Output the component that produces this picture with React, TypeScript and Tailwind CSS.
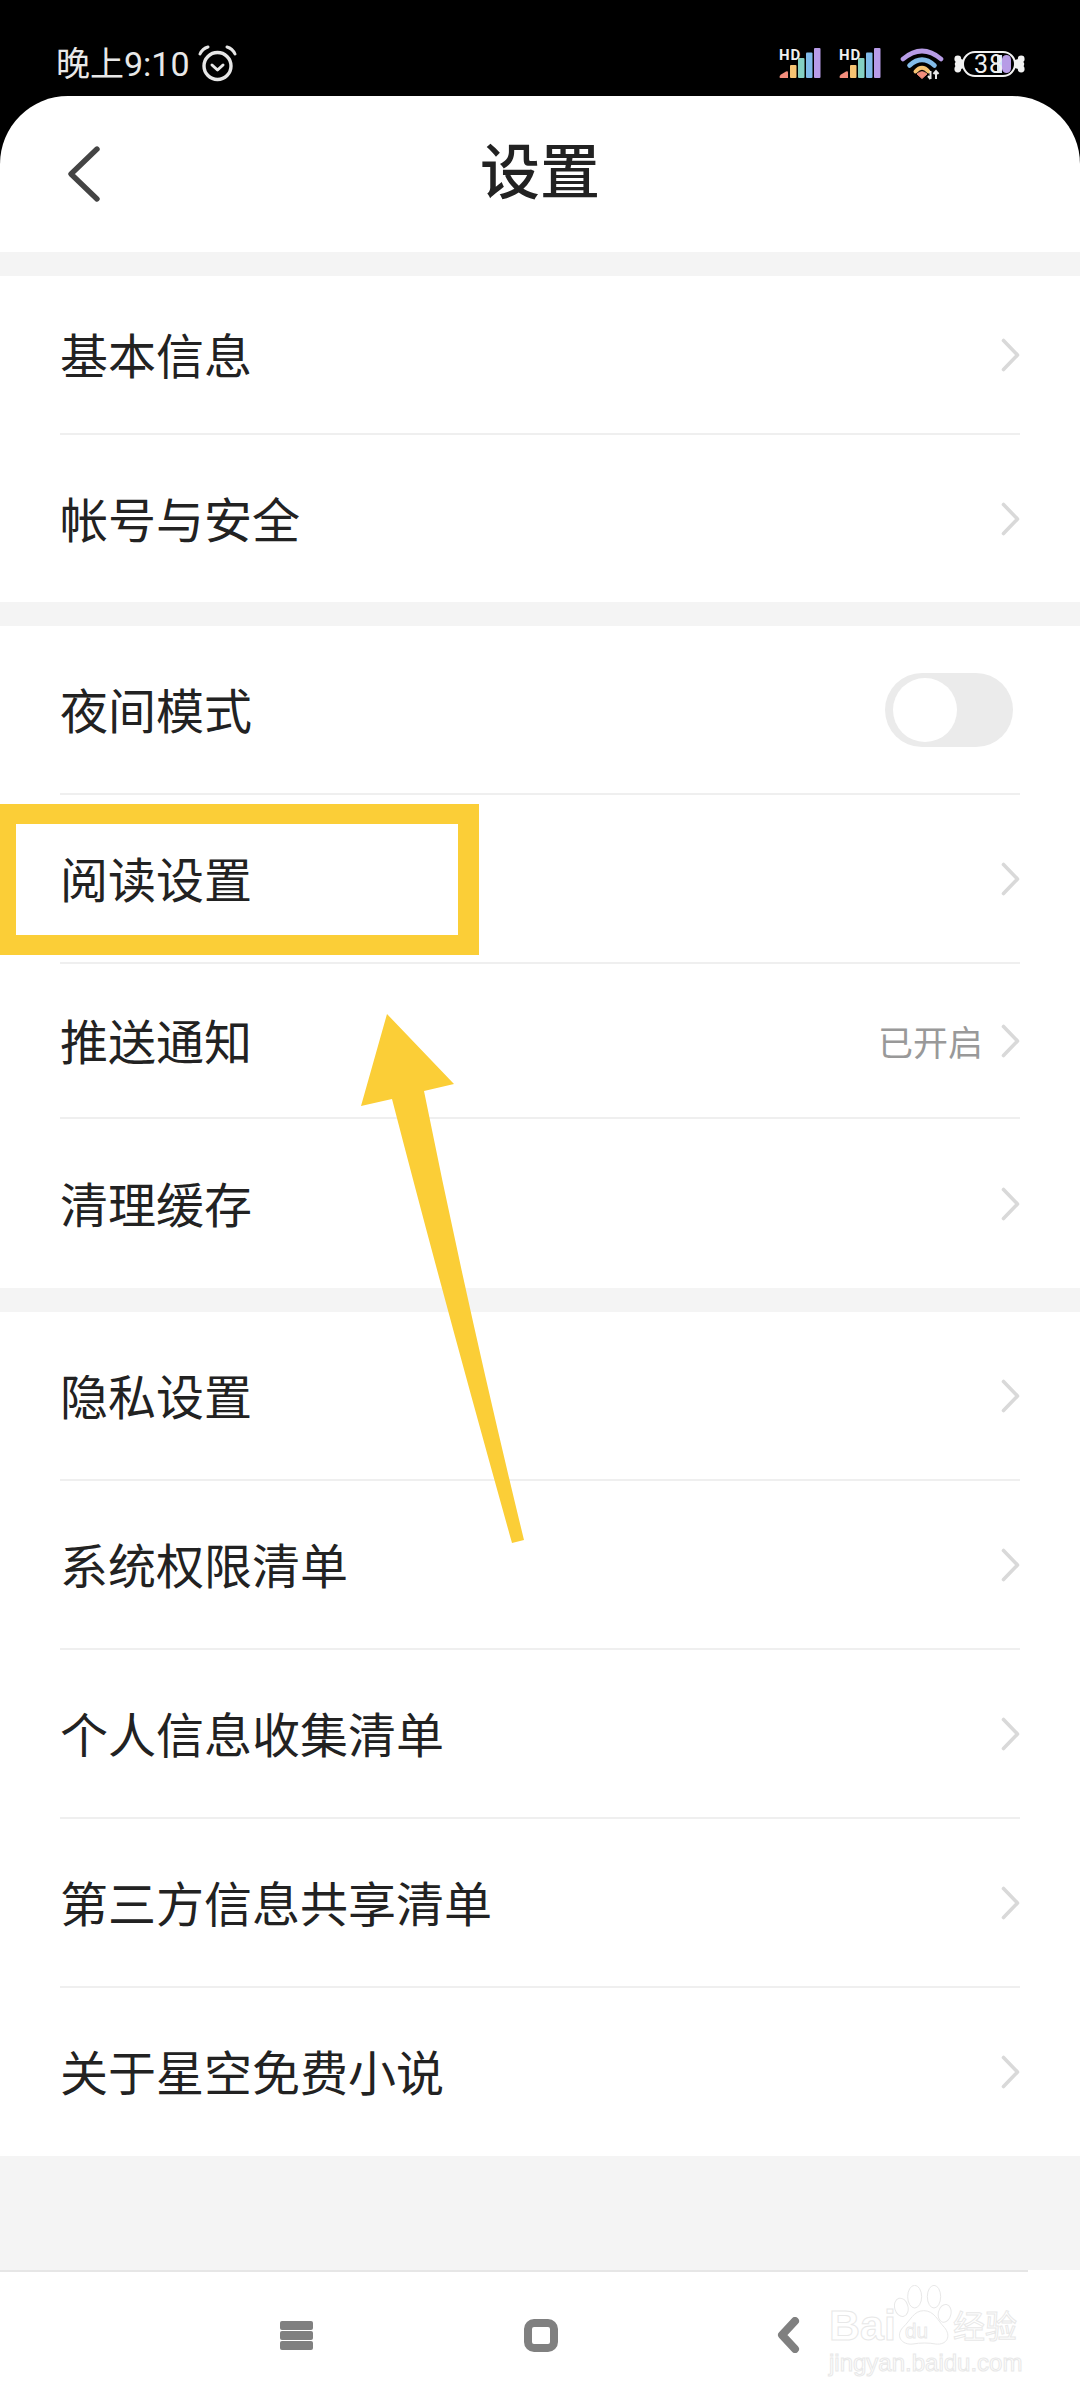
import React from "react";

const Chevron = () => (
  <svg width="19" height="34" viewBox="0 0 19 34" fill="none" className="shrink-0">
    <path d="M2.5 2.5 L16.5 17 L2.5 31.5" stroke="#d9d9d9" strokeWidth="3.6" strokeLinecap="round" strokeLinejoin="round" />
  </svg>
);

const Row = ({
  label,
  h,
  last,
  children,
}: {
  label: string;
  h: string;
  last?: boolean;
  children?: React.ReactNode;
}) => (
  <div className={`mx-[60px] flex items-center justify-between ${h} ${last ? "" : "border-b-2 border-[#efefef]"}`}>
    <span className="pb-[4px] text-[48px] leading-none text-[#222222]">{label}</span>
    {children ?? <Chevron />}
  </div>
);

const Signal = () => (
  <svg width="42" height="30" viewBox="0 0 42 30" className="shrink-0 -translate-y-[1px] overflow-visible">
    <path d="M0.5 29 Q0.5 27.5 2 26.5 L7 23.5 Q9 22.5 9 24.5 L9 30 L1.5 30 Q0.5 30 0.5 29 Z" fill="#f28d7c" />
    <rect x="11" y="17" width="6.5" height="13" rx="1" fill="#f6c473" />
    <rect x="19" y="10" width="6.5" height="20" rx="1" fill="#84d0c2" />
    <rect x="27" y="4.5" width="6.5" height="25.5" rx="1" fill="#7fb9e8" />
    <rect x="35" y="0" width="6.5" height="30" rx="1" fill="#b89ce8" />
    <text x="0" y="12" fontSize="15" fontWeight="700" letterSpacing="0.8" fill="#f0f0f0" fontFamily="Roboto, sans-serif">HD</text>
  </svg>
);

const Wifi = () => (
  <svg width="44" height="33" viewBox="0 0 44 33" fill="none" className="shrink-0">
    <path d="M3 12 Q22 -4 41 12" stroke="#b79ce6" strokeWidth="4.6" strokeLinecap="round" />
    <path d="M9.5 18.5 Q22 7 34.5 18.5" stroke="#82bbe8" strokeWidth="4.6" strokeLinecap="round" />
    <path d="M15.5 24.5 Q22 17 28.5 24.5" stroke="#f6c473" strokeWidth="4" strokeLinecap="round" />
    <path d="M17 27 Q22 22.5 27 27 L22 31.5 Z" fill="#f28d7c" stroke="#f28d7c" strokeWidth="1" strokeLinejoin="round" />
    <path d="M30.5 24 V32 M28 29 L30.5 32 M36 32 V24 M33.5 27 L36 24 L38.5 27" stroke="#e6e6e6" strokeWidth="2" />
  </svg>
);

const Battery = () => (
  <svg width="71" height="32" viewBox="0 0 71 32" fill="none" className="shrink-0">
    <g fill="#f2f2f2">
      <path d="M10 12 L4 10 L4 22 L10 20 Z" />
      <circle cx="3.8" cy="11" r="3.4" />
      <circle cx="3.4" cy="16" r="2.6" />
      <circle cx="3.8" cy="21" r="3.4" />
      <path d="M61 12 L67 10 L67 22 L61 20 Z" />
      <circle cx="67.2" cy="11" r="3.4" />
      <circle cx="67.6" cy="16" r="2.6" />
      <circle cx="67.2" cy="21" r="3.4" />
    </g>
    <rect x="9" y="4" width="52" height="24" rx="12" fill="#000000" stroke="#f2f2f2" strokeWidth="2" />
    <path d="M43 7 H48 V25 H43 Z" fill="#cfe6fb" />
    <rect x="48" y="7" width="9" height="18" rx="4.5" fill="#b79ce6" />
    <text x="20" y="25" fontSize="25" fill="#f0f0f0" fontFamily="Roboto, sans-serif" letterSpacing="1">38</text>
  </svg>
);

const Alarm = () => (
  <svg width="39" height="37" viewBox="0 0 39 37" fill="none" className="shrink-0">
    <circle cx="19.5" cy="21" r="13.5" stroke="#e6e6e6" strokeWidth="3.4" />
    <path d="M14 20 L19.5 25 L25 20" stroke="#e6e6e6" strokeWidth="3" strokeLinecap="round" strokeLinejoin="round" />
    <path d="M2 9 Q4.5 3.5 10 2" stroke="#e6e6e6" strokeWidth="3" strokeLinecap="round" />
    <path d="M37 9 Q34.5 3.5 29 2" stroke="#e6e6e6" strokeWidth="3" strokeLinecap="round" />
  </svg>
);

const Watermark = () => (
  <div className="absolute left-[829px] top-[2285px] w-[197px] font-['Liberation_Sans','Noto_Sans_CJK_SC',sans-serif] text-white [-webkit-text-stroke:1px_#e8e8e8]">
    <div className="flex h-[60px] items-end">
      <span className="w-[65px] text-[43px] font-bold leading-[40px]">Bai</span>
      <svg width="58" height="60" viewBox="283 105 174 180" fill="none" className="shrink-0">
        <g stroke="#e8e8e8" strokeWidth="3" fill="#ffffff">
          <ellipse cx="345" cy="140" rx="21" ry="34" />
          <ellipse cx="403" cy="140" rx="20" ry="34" />
          <ellipse cx="305" cy="172" rx="20" ry="28" transform="rotate(-15 305 172)" />
          <ellipse cx="435" cy="190" rx="19" ry="27" transform="rotate(12 435 190)" />
          <path d="M372 182 C 342 182 332 212 310 232 C 286 258 306 286 340 282 C 360 278 388 278 408 282 C 442 286 456 258 434 232 C 414 212 404 182 372 182 Z" />
        </g>
        <text x="316" y="264" fontSize="62" fontFamily="Liberation Sans, sans-serif" fill="#ffffff" stroke="#e8e8e8" strokeWidth="2.6">du</text>
      </svg>
      <span className="ml-[1px] text-[32px] leading-[42px] font-['Noto_Sans_CJK_SC',sans-serif]">经验</span>
    </div>
    <div className="mt-[3px] text-[24px] leading-[30px]">jingyan.baidu.com</div>
  </div>
);

export default function App() {
  return (
    <div className="relative flex h-[2400px] w-[1080px] flex-col overflow-hidden bg-black font-['Noto_Sans_CJK_SC',sans-serif]">
      {/* status bar */}
      <div className="flex h-[96px] shrink-0 items-center justify-between pl-[56px] pr-[55px] pt-[31px]">
        <div className="flex items-center gap-[8px]">
          <span className="text-[34px] leading-none text-[#e8e8e8] font-['Roboto','Noto_Sans_CJK_SC',sans-serif]">晚上9:10</span>
          <Alarm />
        </div>
        <div className="flex items-center">
          <Signal />
          <div className="w-[18px]" />
          <Signal />
          <div className="w-[19px]" />
          <Wifi />
          <div className="w-[10px]" />
          <Battery />
        </div>
      </div>

      {/* header */}
      <div className="relative flex h-[156px] shrink-0 items-center justify-center rounded-t-[68px] bg-white">
        <svg width="36" height="58" viewBox="0 0 36 58" fill="none" className="absolute left-[66px] top-[49px]">
          <path d="M31 4 L5 29 L31 54" stroke="#444444" strokeWidth="5.4" strokeLinecap="round" strokeLinejoin="round" />
        </svg>
        <span className="pb-[12px] text-[60px] font-medium leading-none text-[#222222]">设置</span>
      </div>

      {/* content */}
      <div className="flex flex-1 flex-col bg-[#f4f4f4] pt-[24px]">
        <div className="bg-white">
          <Row label="基本信息" h="h-[159px]" />
          <Row label="帐号与安全" h="h-[167px]" last />
        </div>
        <div className="mt-[24px] bg-white">
          <Row label="夜间模式" h="h-[169px]">
            <div className="mr-[7px] flex h-[74px] w-[128px] items-center rounded-full bg-[#ebebeb] pl-[8px]">
              <div className="h-[64px] w-[64px] rounded-full bg-white" />
            </div>
          </Row>
          <Row label="阅读设置" h="h-[169px]" />
          <Row label="推送通知" h="h-[155px]">
            <div className="flex items-center gap-[18px]">
              <span className="text-[35px] leading-none text-[#999999]">已开启</span>
              <Chevron />
            </div>
          </Row>
          <Row label="清理缓存" h="h-[169px]" last />
        </div>
        <div className="mt-[24px] bg-white">
          <Row label="隐私设置" h="h-[169px]" />
          <Row label="系统权限清单" h="h-[169px]" />
          <Row label="个人信息收集清单" h="h-[169px]" />
          <Row label="第三方信息共享清单" h="h-[169px]" />
          <Row label="关于星空免费小说" h="h-[168px]" last />
        </div>
      </div>

      {/* nav */}
      <div className="h-[130px] shrink-0 bg-white">
        <div className="h-[2px] w-[1028px] bg-[#e6e6e6]" />
        <div className="flex h-[126px] items-center pl-[280px]">
          <div className="flex w-[33px] flex-col gap-[1px]">
            <div className="h-[9px] rounded-[2px] bg-[#808080]" />
            <div className="h-[9px] rounded-[2px] bg-[#808080]" />
            <div className="h-[9px] rounded-[2px] bg-[#808080]" />
          </div>
          <div className="ml-[211px] h-[33px] w-[34px] rounded-[10px] border-[8px] border-[#808080]" />
          <svg width="23" height="36" viewBox="0 0 23 36" className="ml-[219px]">
            <path d="M18 4 L5 18 L18 32" fill="none" stroke="#808080" strokeWidth="8" strokeLinecap="round" strokeLinejoin="round" />
          </svg>
        </div>
      </div>

      {/* annotation overlays */}
      <div className="absolute left-0 top-[804px] h-[151px] w-[479px] border-y-[20px] border-l-[16px] border-r-[21px] border-[#fbce37]" />
      <svg width="190" height="540" viewBox="350 1008 190 540" className="absolute left-[350px] top-[1008px]">
        <path
          d="M387 1014 L454 1084 L424 1091 Q468 1310 524 1540 L512 1543 Q444 1300 392 1099 L361 1106 Z"
          fill="#fbce37"
        />
      </svg>
      <Watermark />
    </div>
  );
}
